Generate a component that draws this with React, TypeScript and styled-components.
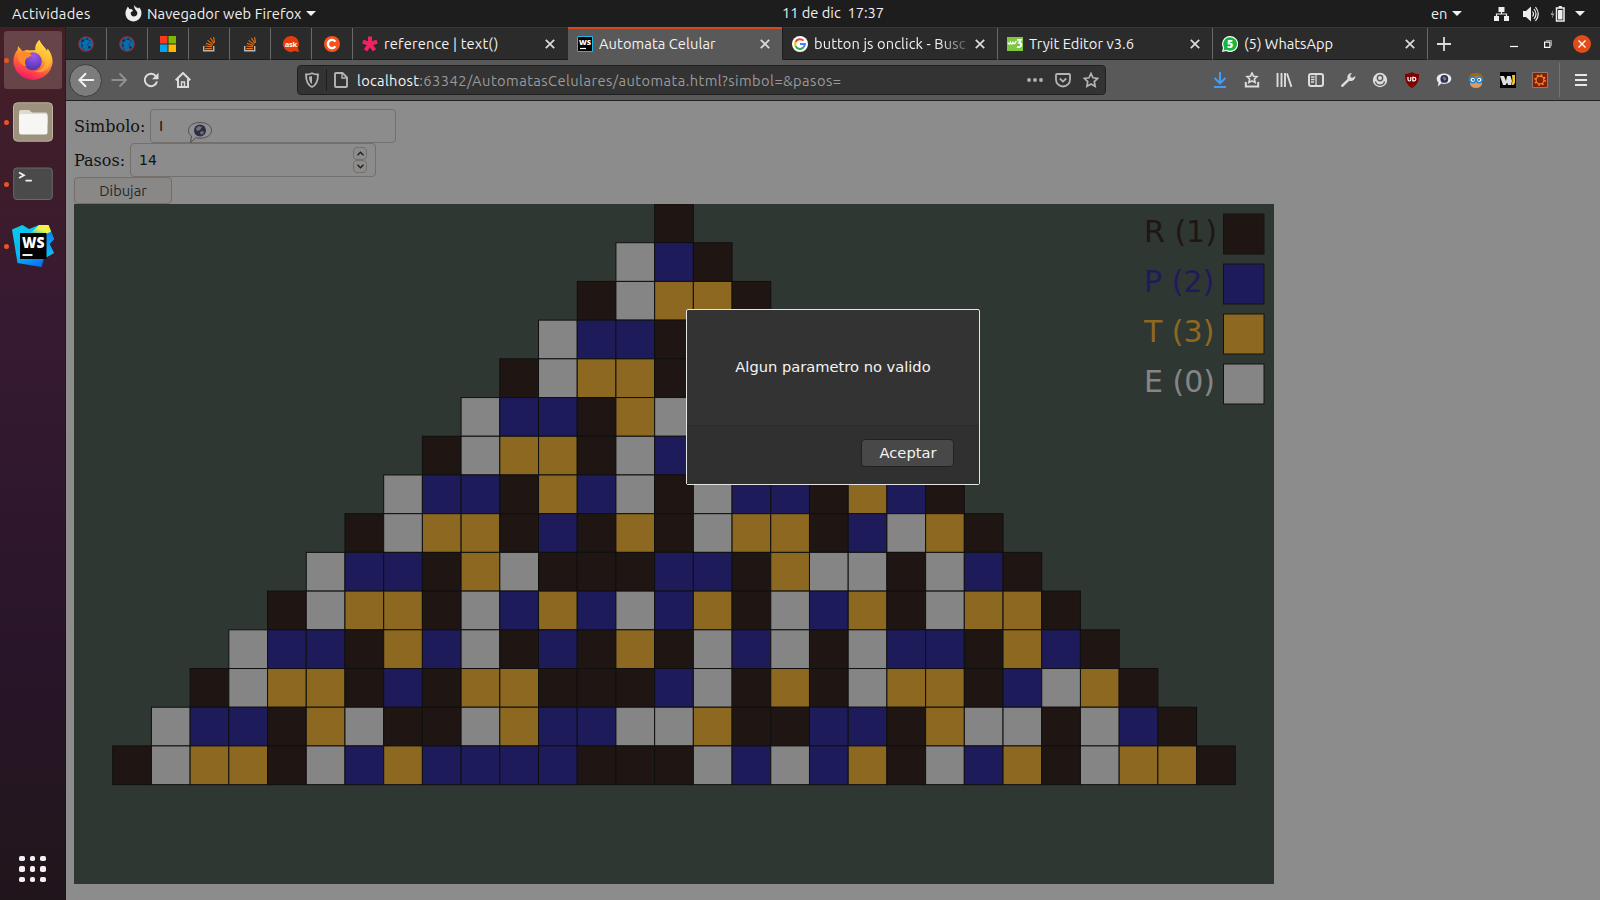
import React from "react";
import styled, { createGlobalStyle, css } from "styled-components";

const ui = `"Ubuntu", "Noto Sans", "Open Sans", sans-serif`;

const Global = createGlobalStyle`
  *, *::before, *::after { box-sizing: border-box; }
  html, body { margin: 0; padding: 0; }
  body { width: 1600px; height: 900px; overflow: hidden; background: #8c8c8c; font-family: ${ui}; }
  svg { display: block; flex: none; }
`;

const Desktop = styled.div`
  display: grid;
  grid-template: 27px 873px / 66px 1534px;
  width: 1600px;
  height: 900px;
  overflow: hidden;
`;

/* ---------- system bar ---------- */
const TopBar = styled.header`
  grid-column: 1 / 3;
  display: grid;
  grid-template-columns: 1fr auto 1fr;
  align-items: center;
  background: #1d1d1d;
  color: #f0f0f0;
  font-size: 14.67px;
  line-height: 26px;
  white-space: pre;
`;
const BarLeft = styled.div`
  display: flex;
  align-items: center;
  padding-left: 12px;
`;
const BarRight = styled.div`
  display: flex;
  align-items: center;
  justify-content: flex-end;
  padding-right: 15px;
`;
const BarText = styled.span<{ $w?: number; $ls?: number }>`
  display: block;
  width: ${(p) => (p.$w ? `${p.$w}px` : "auto")};
  letter-spacing: ${(p) => p.$ls ?? 0}px;
`;
const Clock = styled(BarText)`
  padding: 0 0 2px 66px;
  line-height: 24px;
`;
const Gap = styled.i<{ $w: number }>`
  flex: none;
  width: ${(p) => p.$w}px;
`;
const Caret = styled.i`
  flex: none;
  border: 5px solid transparent;
  border-top: 5px solid #f0f0f0;
  border-bottom: 0;
`;

/* ---------- dock ---------- */
const Dock = styled.nav`
  display: flex;
  flex-direction: column;
  align-items: center;
  gap: 4px;
  padding: 4px 0 0;
  background: linear-gradient(#461f26 0, #3f1d2a 120px, #361a31 300px, #29152a 620px, #23161f 800px, #21151c 100%);
  border-right: 1px solid rgba(20, 10, 16, 0.35);
`;
const DockItem = styled.div<{ $active?: boolean }>`
  position: relative;
  display: flex;
  align-items: center;
  justify-content: center;
  width: 58px;
  height: 58px;
  border-radius: 3px;
  background: ${(p) => (p.$active ? "#664448" : "transparent")};
  &::before {
    content: "";
    position: absolute;
    left: 0;
    top: 26.5px;
    width: 5px;
    height: 5px;
    border-radius: 50%;
    background: #e95420;
  }
`;
const AppsGrid = styled.div`
  display: grid;
  grid-template-columns: repeat(3, 5.4px);
  gap: 5.1px;
  margin: auto 0 18px;
  i { height: 5.4px; border-radius: 1.8px; background: #f2f0f1; }
`;

/* ---------- browser ---------- */
const Browser = styled.main`
  display: grid;
  grid-template-rows: 33px 41px 799px;
`;
const TabStrip = styled.div`
  display: flex;
  background: #2b2b2b;
  border-top: 1px solid #383838;
`;
const tabBase = css`
  display: flex;
  align-items: center;
  height: 32px;
  border-right: 1px solid #6a6a6a;
  border-bottom: 1px solid #1c1c1c;
`;
const PinnedTab = styled.div`
  ${tabBase}
  width: 41px;
  justify-content: center;
`;
const Tab = styled.div<{ $active?: boolean; $plain?: boolean }>`
  ${tabBase}
  width: 215px;
  padding: 0 12px 0 9px;
  ${(p) => p.$plain && "border-right-color: #2b2b2b;"}
  ${(p) =>
    p.$active &&
    css`
      height: 33px;
      margin-top: -1px;
      padding-top: 1px;
      background: #595959;
      border-bottom-color: #595959;
      border-right-color: #1c1c1c;
      box-shadow: inset 0 2px #d9481c;
    `}
`;
const TabTitle = styled.span<{ $ls: number; $fade?: boolean }>`
  flex: 1;
  margin-left: 6px;
  overflow: hidden;
  white-space: nowrap;
  font-size: 14.67px;
  line-height: 20px;
  letter-spacing: ${(p) => p.$ls}px;
  color: #f2f2f2;
  ${(p) => p.$fade && "mask-image: linear-gradient(90deg, #000 125px, transparent 160px);"}
`;
const TabTools = styled.div`
  display: flex;
  align-items: center;
  flex: 1;
  padding: 0 9px 0 9px;
`;

const Toolbar = styled.div`
  display: flex;
  align-items: center;
  background: #595959;
  border-bottom: 1px solid #222;
`;
const BackButton = styled.div`
  display: flex;
  align-items: center;
  justify-content: center;
  width: 33px;
  height: 33px;
  margin-left: 3px;
  border-radius: 50%;
  border: 1px solid #3c3c3c;
  background: #7c7c7c;
`;
const NavIcons = styled.div`
  display: flex;
  gap: 16px;
  width: 195px;
  padding-left: 9px;
`;
const UrlBar = styled.div`
  display: flex;
  align-items: center;
  width: 809px;
  height: 30px;
  padding: 0 6px;
  border: 1px solid #202020;
  border-radius: 4px;
  background: #333;
`;
const UrlDivider = styled.i`
  width: 1px;
  height: 22px;
  margin: 0 6px;
  background: #1f1f1f;
`;
const Url = styled.span`
  flex: 1;
  margin-left: 8px;
  font-size: 14.67px;
  line-height: 20px;
  padding-top: 1px;
  letter-spacing: 0.44px;
  color: #9a9a9a;
  white-space: nowrap;
  b { font-weight: 400; color: #f4f4f4; letter-spacing: 0.3px; }
`;
const UrlTools = styled.div`
  display: flex;
  gap: 12px;
`;
const Extensions = styled.div`
  display: flex;
  align-items: center;
  gap: 16px;
  margin-left: 106px;
`;
const MenuDivider = styled.i`
  width: 1px;
  height: 34px;
  margin: 0 14px 0 11px;
  background: #757575;
`;

/* ---------- page ---------- */
const Page = styled.section`
  position: relative;
  padding: 8px;
  background: #8c8c8c;
  color: #121212;
`;
const Field = styled.div`
  display: flex;
  align-items: center;
  height: 34px;
  font: 16px/32px "DejaVu Serif", serif;
`;
const FieldLabel = styled.label<{ $w: number }>`
  width: ${(p) => p.$w}px;
  padding-top: 2px;
  white-space: nowrap;
`;
const Input = styled.div`
  display: flex;
  align-items: center;
  justify-content: space-between;
  width: 246px;
  height: 34px;
  padding: 1px 8px 0;
  border: 1px solid #746f6b;
  border-radius: 4px;
  font: 14px/21px "DejaVu Sans", sans-serif;
`;
const Spinner = styled.div`
  display: flex;
  flex-direction: column;
  margin-top: -1px;
  span {
    display: flex;
    align-items: center;
    justify-content: center;
    width: 14px;
    height: 13px;
    border: 1px solid #746f6b;
    border-radius: 4px;
  }
`;
const DrawButton = styled.button`
  display: block;
  width: 98px;
  height: 27px;
  padding: 0;
  border: 1px solid #736e6a;
  border-radius: 4px;
  background: #898887;
  color: #24282a;
  font: 14.67px/20px ${ui};
`;
const Bubble = styled.div`
  position: absolute;
  left: 121px;
  top: 20px;
`;
const Board = styled.svg`
  background: #2f3733;
`;
const LegendText = styled.text`
  font: 30px "DejaVu Sans", sans-serif;
`;

const Dialog = styled.div`
  position: absolute;
  left: 620px;
  top: 208px;
  display: grid;
  grid-template-rows: 115px 59px;
  width: 294px;
  height: 176px;
  border: 1px solid #e4e4e4;
  border-radius: 2px;
  background: #333;
  color: #f3f3f3;
  font: 14.67px/20px "DejaVu Sans", sans-serif;
`;
const Message = styled.p`
  margin: 0;
  padding-top: 47px;
  text-align: center;
  white-space: nowrap;
`;
const DialogFooter = styled.div`
  display: flex;
  justify-content: flex-end;
  align-items: flex-start;
  padding: 13px 25px 0 0;
  border-top: 1px solid #2d2d2d;
  background: #303030;
`;
const Accept = styled.button`
  width: 93px;
  height: 28px;
  padding: 0 0 0 1px;
  border: 1px solid #212121;
  border-radius: 4px;
  background: #484848;
  color: inherit;
  font: inherit;
`;

/* ---------- data ---------- */
const COLORS: Record<string, string> = { R: "#1f1613", P: "#1e1b5b", T: "#8c6820", E: "#858585" };
const ROWS = [
  "R",
  "EPR",
  "RETTR",
  "EPPRTPR",
  "RETTRPETR",
  "EPPRTEREPPR",
  "RETTREPTRETTR",
  "EPPRTPEREPPRTPR",
  "RETTRPRTRETTRPETR",
  "EPPRTERRRPPRTEEREPR",
  "RETTREPTPEPTREPTRETTR",
  "EPPRTPERPRTREPEREPPRTPR",
  "RETTRPRTTRRRPERTRETTRPETR",
  "EPPRTERRETPPEETRRPPRTEEREPR",
  "RETTREPTPPPPRRREPEPTREPTRETTR",
];
const CELL = 1200 / 31;
const LEGEND = [
  { k: "R", n: 1 },
  { k: "P", n: 2 },
  { k: "T", n: 3 },
  { k: "E", n: 0 },
];

/* ---------- icons ---------- */
const Icon = ({ children, w = 16, h = w, vb = `0 0 ${w} ${h}` }: { children: React.ReactNode; w?: number; h?: number; vb?: string }) => (
  <svg width={w} height={h} viewBox={vb} fill="none">{children}</svg>
);
const CloseX = () => (
  <Icon w={10}><path d="M.8.8l8.4 8.4M9.2.8L.8 9.2" stroke="#dcdcdc" strokeWidth="1.7" /></Icon>
);
const GlobeRed = () => (
  <Icon>
    <circle cx="8" cy="8" r="7.3" fill="#0b6cab" stroke="#9c2a30" strokeWidth="1.1" />
    <path d="M4.800 2.500C2.500 6 3 10.500 6 14M5 4.500l4-1.700 3.500 2.500M9.500 8.500L12.500 5.500M9.500 8.500l2 3.500" stroke="#163a58" strokeWidth=".8" />
    <circle cx="4.700" cy="4.700" r="1.200" fill="#142c44" /><circle cx="9.300" cy="2.900" r=".9" fill="#142c44" /><circle cx="4" cy="9.500" r="1" fill="#142c44" /><circle cx="11.500" cy="11.500" r="1.200" fill="#142c44" />
  </Icon>
);
const MsLogo = () => (
  <Icon>
    <path fill="#f8391e" d="M0 0h7.5v7.5H0z" /><path fill="#7db900" d="M8.5 0H16v7.5H8.5z" />
    <path fill="#00a4ef" d="M0 8.5h7.5V16H0z" /><path fill="#ffb900" d="M8.5 8.5H16V16H8.5z" />
  </Icon>
);
const StackLogo = () => (
  <Icon>
    <path d="M2.7 10v4.8h10V10" stroke="#b5b8ba" strokeWidth="1.4" />
    <path d="M4.3 12.6h6.6M4.4 10l6.6.8M5 7.2l6.3 2.3M6.6 4.4l5.4 4M9.3 2l3.6 5.3M12.6 1l.9 5.6" stroke="#f0710c" strokeWidth="1.1" />
  </Icon>
);
const AskLogo = () => (
  <Icon>
    <path d="M8 0a8 8 0 1 0 3.6 15.1L16 16l-1-4.200A8 8 0 0 0 8 0z" fill="#e63b0b" />
    <text x="8" y="10.800" fill="#fff" fontFamily="Open Sans" fontWeight="700" fontSize="7.600" textAnchor="middle" textLength="12.500">ask</text>
  </Icon>
);
const CLogo = () => (
  <Icon><circle cx="8" cy="8" r="8" fill="#f8531f" /><path d="M11.300 5.600a4.100 4.100 0 1 0 0 4.800" stroke="#fff" strokeWidth="2.400" /></Icon>
);
const AsteriskLogo = () => (
  <Icon><path d="M8 8V.5M8 8L.800 5.700M8 8l7.200-2.300M8 8l-4.500 6.300M8 8l4.500 6.300" stroke="#f2205f" strokeWidth="4" /></Icon>
);
const WsSmall = () => (
  <Icon>
    <path d="M.5.5h15v15H.5z" fill="#000" stroke="#18b8ea" />
    <text x="2" y="8.600" fill="#fff" fontFamily="Open Sans" fontWeight="800" fontSize="7.500" textLength="12">WS</text>
    <path d="M3 12.500h6" stroke="#fff" strokeWidth="1.200" />
  </Icon>
);
const GoogleLogo = () => (
  <Icon>
    <circle cx="8" cy="8" r="8" fill="#fff" />
    <path d="M11.500 4.600A4.900 4.900 0 0 0 3.600 6" stroke="#ea4335" strokeWidth="2" />
    <path d="M3.600 5.900a4.900 4.900 0 0 0 0 4.300" stroke="#fbbc05" strokeWidth="2" />
    <path d="M3.600 10.100a4.900 4.900 0 0 0 7.700 1.500" stroke="#34a853" strokeWidth="2" />
    <path d="M8 8h4.900a4.900 4.900 0 0 1-1.600 3.600" stroke="#4285f4" strokeWidth="2" />
  </Icon>
);
const W3Logo = () => (
  <Icon>
    <path d="M0 1h16v14H0z" fill="#7fc641" />
    <path d="M1 6.500q1 3 2.500 0 1 3 2.500 0 1.500 3 3.300-1.500" stroke="#fff" strokeWidth="1.500" />
    <path d="M10 3.800h3.800L12 6.700q2.600.4 2.200 2.600Q13.400 12 10 10.800" stroke="#fff" strokeWidth="1.800" />
  </Icon>
);
const WhatsLogo = () => (
  <Icon>
    <path d="M8 0a8 8 0 0 0-7 11.800L0 16l4.200-1A8 8 0 1 0 8 0z" fill="#fff" />
    <path d="M8 1.200a6.800 6.800 0 0 0-5.800 10.300l-.7 3 3-.8A6.800 6.800 0 1 0 8 1.200z" fill="#12b83f" />
    <text x="8" y="11.800" fill="#fff" fontFamily="Open Sans" fontWeight="800" fontSize="10.500" textAnchor="middle">5</text>
  </Icon>
);
const FirefoxMono = () => (
  <Icon w={17}>
    <path d="M9 0c1 2 3 2.500 4.200 3.500l.8-1.200c2 2 2.800 4.500 2.400 7A8 8 0 0 1 .600 10C.2 7 .8 5 2 3.200L2.800 1.500 4.500 4 7 4.200 8 6 5.800 7.300c-.3 2.900 1.200 4.200 3.200 4.200 2.600 0 4-2.200 3-4.700C11 5 9 4 9 0z" fill="#eee" />
  </Icon>
);
const FirefoxBig = () => (
  <svg width="40" height="42" viewBox="0 0 40 42">
    <defs>
      <linearGradient id="fxBody" x1="0.75" y1="0.05" x2="0.35" y2="1">
        <stop offset="0" stopColor="#fff04a" /><stop offset=".35" stopColor="#ffb22e" /><stop offset=".65" stopColor="#ff6038" /><stop offset="1" stopColor="#f5156c" />
      </linearGradient>
      <radialGradient id="fxCore" cx=".55" cy=".2" r=".8"><stop offset="0" stopColor="#a158ef" /><stop offset="1" stopColor="#4d35b0" /></radialGradient>
    </defs>
    <path d="M26.500 1c2 5 5.500 7 7.500 11l.5-2.500C38 13.500 40 19 39.500 24A19.700 19.700 0 0 1 .500 24C.2 18 2 13.500 4.500 11l.5-4 4.500 5.200 4.500-1.500C17 12 20 11 22.500 11 22 7 24 3 26.500 1z" fill="url(#fxBody)" />
    <circle cx="19.800" cy="22.300" r="9" fill="url(#fxCore)" />
    <path d="M5 14c4-2.500 10-1.500 13.500 1.800 0 2.200-4 2-5.500 4.200-1.800 2.500-1 5 .5 7.500C7 26 4 20 5 14z" fill="#ff8a2e" />
    <path d="M22.500 11c5 2 8 6 7.500 11 1.200-1 1.500-2.500 1.500-4 3 6-1.500 14-10 14.500 9 3 16-3 16-11C37.500 13 27 9 26.500 1c-3 2.500-5 6-4 10z" fill="#ffc53a" opacity=".55" />
  </svg>
);
const FilesIcon = () => (
  <svg width="40" height="40" viewBox="0 0 40 40">
    <rect x=".5" y=".8" width="39" height="38.400" rx="4" fill="#9b917c" stroke="#bcb49f" />
    <path d="M6 10q0-2 2-2h8l3 2.500h13.500q2 0 2 2V22H6z" fill="#dedad0" />
    <rect x="6" y="12" width="28.500" height="20.500" rx="2.500" fill="#f8f6f4" />
  </svg>
);
const TerminalIcon = () => (
  <svg width="40" height="34" viewBox="0 0 40 34">
    <rect x=".7" y="1" width="38.600" height="31.500" rx="3" fill="#4a4a4a" stroke="#686868" />
    <path d="M6 5.500l5 2.700L6 11M12.500 13.700h6.300" stroke="#f1f1f1" strokeWidth="1.700" fill="none" />
  </svg>
);
const WebStormIcon = () => (
  <svg width="42" height="42" viewBox="0 0 42 42">
    <defs>
      <linearGradient id="wsA" x1="0" y1="0" x2=".6" y2="1"><stop offset="0" stopColor="#0ccbe8" /><stop offset=".6" stopColor="#09b9f6" /><stop offset="1" stopColor="#0b6ff2" /></linearGradient>
      <linearGradient id="wsB" x1="0" y1="1" x2="1" y2="0"><stop offset="0" stopColor="#0dc0ee" /><stop offset=".5" stopColor="#e8f449" /><stop offset="1" stopColor="#fff14a" /></linearGradient>
      <linearGradient id="wsC" x1="0" y1="0" x2="0" y2="1"><stop offset="0" stopColor="#0b7ff5" /><stop offset="1" stopColor="#0cc4f4" /></linearGradient>
    </defs>
    <path d="M0 4.500L10.500 0l6.500 4L27 0h9.500L42 14l-4.500 5L42 28l-10 5.500-2.500 8.500L5.500 38z" fill="url(#wsA)" />
    <path d="M34 9l5-2 3 7-4.500 5L42 28l-8 4.500z" fill="url(#wsC)" />
    <path d="M18 8.500L27 0h9.500L39 6.500 34 9z" fill="url(#wsB)" />
    <rect x="8" y="8" width="26.500" height="26" fill="#000" />
    <text x="10" y="22.500" fill="#fff" fontFamily="Open Sans" fontWeight="800" fontSize="15.500" textLength="22.500" lengthAdjust="spacingAndGlyphs">WS</text>
    <path d="M10.500 30h10" stroke="#fff" strokeWidth="1.900" />
  </svg>
);
const Lens = () => (
  <svg width="16" height="16" viewBox="0 0 16 16" fill="none">
    <path d="M8 1.500c4.300 0 7.300 2.300 7.300 5.300s-3 5.200-7.300 5.200c-1 0-2-.1-2.800-.4L1.800 14.500l.7-4C1.300 9.500.700 8.400.700 6.800c0-3 3-5.300 7.300-5.300z" fill="#e9e9ee" />
    <circle cx="8.300" cy="6.900" r="3.900" fill="#27305e" /><path d="M6.500 5.500l2-1 2 2.500-2 2z" fill="#8f7a7a" />
  </svg>
);

const G = "#dcdcdc";

export default function App() {
  return (
    <>
      <Global />
      <Desktop>
        <TopBar>
          <BarLeft>
            <BarText $w={113} $ls={0.28}>Actividades</BarText>
            <FirefoxMono />
            <Gap $w={5} />
            <BarText $w={159} $ls={0.08}>Navegador web Firefox</BarText>
            <Caret />
          </BarLeft>
          <Clock>11 de dic  17:37</Clock>
          <BarRight>
            <BarText $w={21}>en</BarText>
            <Caret />
            <Gap $w={32} />
            <Icon w={15} h={14}><path d="M4.500 0h6v5h-6zM0 9h5v5H0zM10 9h5v5h-5z" fill="#eee" /><path d="M7.500 4v3M2.500 9.500V7h10v2.500" stroke="#eee" strokeWidth="1.200" /></Icon>
            <Gap $w={14} />
            <Icon w={16}><path d="M0 5h3l5-4.500v15L3 11H0z" fill="#eee" /><path d="M9.500 5.500q2 2.500 0 5M11 3q4 5 0 10M12.500 1q5.500 7 0 14" stroke="#eee" strokeWidth="1.200" /></Icon>
            <Gap $w={11} />
            <Icon w={15} h={16}><path d="M3.300 3.500L.500 9h2l-.8 4 2.800-5.500h-2z" fill="#999" /><path d="M6.500 2h7.500v13H6.500zM8.700.700h3.200" stroke="#eee" strokeWidth="1.500" /><path d="M8 4h4.500v9.500H8z" fill="#eee" /></Icon>
            <Gap $w={10} />
            <Caret />
          </BarRight>
        </TopBar>

        <Dock>
          <DockItem $active><FirefoxBig /></DockItem>
          <DockItem><FilesIcon /></DockItem>
          <DockItem><TerminalIcon /></DockItem>
          <DockItem><WebStormIcon /></DockItem>
          <AppsGrid>{Array.from({ length: 9 }, (_, i) => <i key={i} />)}</AppsGrid>
        </Dock>

        <Browser>
          <TabStrip>
            <PinnedTab><GlobeRed /></PinnedTab>
            <PinnedTab><GlobeRed /></PinnedTab>
            <PinnedTab><MsLogo /></PinnedTab>
            <PinnedTab><StackLogo /></PinnedTab>
            <PinnedTab><StackLogo /></PinnedTab>
            <PinnedTab><AskLogo /></PinnedTab>
            <PinnedTab><CLogo /></PinnedTab>
            <Tab $plain><AsteriskLogo /><TabTitle $ls={0.16}>reference | text()</TabTitle><CloseX /></Tab>
            <Tab $active><WsSmall /><TabTitle $ls={0.09}>Automata Celular</TabTitle><CloseX /></Tab>
            <Tab><GoogleLogo /><TabTitle $ls={0.1} $fade>button js onclick - Busc</TabTitle><CloseX /></Tab>
            <Tab><W3Logo /><TabTitle $ls={0.06}>Tryit Editor v3.6</TabTitle><CloseX /></Tab>
            <Tab><WhatsLogo /><TabTitle $ls={0}>(5) WhatsApp</TabTitle><CloseX /></Tab>
            <TabTools>
              <Icon w={14}><path d="M7 0v14M0 7h14" stroke={G} strokeWidth="1.800" /></Icon>
              <Gap $w={59} />
              <Icon w={8} h={10}><path d="M0 7.500h8" stroke="#fff" strokeWidth="1.200" /></Icon>
              <Gap $w={26} />
              <Icon w={8}><path d="M.600 2.100h5.300v5.300H.600z" stroke="#fff" strokeWidth="1.200" /><path d="M2 .500h5.500V6" stroke="#999" /></Icon>
              <Gap $w={21} />
              <Icon w={18}><circle cx="9" cy="9" r="9" fill="#e24c1a" /><path d="M5.500 5.500l7 7m0-7l-7 7" stroke="#fff" strokeWidth="1.400" /></Icon>
            </TabTools>
          </TabStrip>

          <Toolbar>
            <BackButton><Icon><path d="M8 1.200L1.400 8 8 14.800M1.500 8H16" stroke="#f0f0f0" strokeWidth="2" /></Icon></BackButton>
            <NavIcons>
              <Icon><path d="M8.500 1.500L15 8l-6.500 6.500M15 8H.500" stroke="#8f8f8f" strokeWidth="2" /></Icon>
              <Icon><path d="M13 4.300A6.200 6.200 0 1 0 14 9.600" stroke={G} strokeWidth="2" /><path d="M15.500.800v6.500H9z" fill={G} /></Icon>
              <Icon><path d="M.700 8.300L8 1l7.300 7.300" stroke={G} strokeWidth="2" /><path d="M3 7v8h10V7" stroke={G} strokeWidth="2" /><path d="M6.500 15v-5h3v5" stroke={G} strokeWidth="1.400" /></Icon>
            </NavIcons>
            <UrlBar>
              <Icon><path d="M8 1.200c2 1 4 1.300 6 1.300C14 9 12.500 13 8 15 3.500 13 2 9 2 2.500c2 0 4-.3 6-1.300z" stroke="#b4b4b4" strokeWidth="1.800" /><path d="M8 4v8C6 11 5 8.500 5 4.800z" fill="#b4b4b4" /></Icon>
              <UrlDivider />
              <Icon><path d="M3 1h6.500L14 5.500V14q0 1-1 1H3q-1 0-1-1V2q0-1 1-1z" stroke="#b4b4b4" strokeWidth="1.900" /><path d="M9 1v5h5" stroke="#b4b4b4" strokeWidth="1.400" /></Icon>
              <Url><b>localhost</b>:63342/AutomatasCelulares/automata.html?simbol=&amp;pasos=</Url>
              <UrlTools>
                <Icon><circle cx="2" cy="8" r="1.900" fill="#b4b4b4" /><circle cx="8" cy="8" r="1.900" fill="#b4b4b4" /><circle cx="14" cy="8" r="1.900" fill="#b4b4b4" /></Icon>
                <Icon><path d="M2 2h12q1 0 1 1v4.500a7 7 0 0 1-14 0V3q0-1 1-1z" stroke="#b4b4b4" strokeWidth="1.800" /><path d="M4.800 6.500L8 9.600l3.200-3.100" stroke="#b4b4b4" strokeWidth="1.800" /></Icon>
                <Icon><path d="M8 1.500l2 4.300 4.700.6-3.400 3.200.8 4.700L8 12l-4.100 2.300.8-4.700L1.300 6.400 6 5.800z" stroke="#b4b4b4" strokeWidth="1.700" /></Icon>
              </UrlTools>
            </UrlBar>
            <Extensions>
              <Icon><path d="M8 0v11M2.500 6L8 11.300 13.500 6M2 15h12" stroke="#419cf5" strokeWidth="2" /></Icon>
              <Icon><path d="M8 1l1.500 3.200 3.500.4-2.600 2.400.7 3.500L8 8.800l-3.100 1.700.7-3.500L3 4.600l3.500-.4z" stroke={G} strokeWidth="1.600" /><path d="M1.800 10v4.600h12.400V10" stroke={G} strokeWidth="2" /></Icon>
              <Icon><path d="M1.500 1v14M5.500 1v14M9 1v14M11 1.500L15.500 15" stroke={G} strokeWidth="1.900" /></Icon>
              <Icon><rect x="1" y="2" width="14" height="12" rx="2" stroke={G} strokeWidth="2" /><path d="M8 2v12M3 5h3.500M3 7.500h3.500M3 10h3" stroke={G} strokeWidth="1.300" /></Icon>
              <Icon><path d="M1 13.300L7.500 7C7 4 8 1.200 12 1L10.300 3.500l.4 2 2 .3L15.300 4c0 4-3 5.500-6 4.800L2.800 15q-2 .2-1.800-1.700z" fill={G} /></Icon>
              <Icon><circle cx="8" cy="8" r="7.200" fill={G} /><circle cx="8" cy="6" r="2.700" fill={G} stroke="#595959" strokeWidth="1.400" /><path d="M3.500 9.500q.5 3.500 4.500 3.500t4.500-3.500" stroke="#595959" strokeWidth="1.500" /></Icon>
              <Icon><path d="M8 0c2 1.500 4.500 2 7 2 0 6-1 10.500-7 14C2 12.500 1 8 1 2c2.500 0 5-.5 7-2z" fill="#800000" /><path d="M4 5v2.500Q4 9 5.400 9t1.400-1.500V5" stroke="#fff" strokeWidth="1.200" /><path d="M8.800 5.300h1.200a1.800 1.800 0 0 1 0 3.600H8.800z" stroke="#fff" strokeWidth="1.200" /></Icon>
              <Lens />
              <Icon><path d="M2 6C2 0 14 0 14 6v6q-1 4-6 4t-6-4z" fill="#e09a62" /><path d="M1 7C1 2 4 1 8 1s7 1 7 6L11 4 6 5z" fill="#a8660c" /><circle cx="4.700" cy="7.800" r="2.900" fill="#fff" stroke="#1387dc" strokeWidth="1.500" /><circle cx="11.300" cy="7.800" r="2.900" fill="#fff" stroke="#1387dc" strokeWidth="1.500" /><circle cx="5" cy="7.800" r=".9" fill="#124" /><circle cx="11" cy="7.800" r=".9" fill="#124" /></Icon>
              <Icon><path d="M0 0h16v16H0z" fill="#000" /><path d="M0 4h4l2 5 1-5h3.500L12 9l-1 4H8.200L7 10.500 5.800 13H3z" fill="#dedede" /><path d="M12 3h3v8l-1.500 2h-2l1-4z" fill="#f4c22b" /></Icon>
              <Icon><path d="M.5.5h15v15H.5z" fill="#8c1a05" stroke="#8e7a70" /><circle cx="8" cy="8" r="5" stroke="#e29a22" strokeWidth="1.600" strokeDasharray="1.700 2.227" /><circle cx="8" cy="8" r="3.900" stroke="#e29a22" strokeWidth="1.100" /></Icon>
            </Extensions>
            <MenuDivider />
            <Icon w={14} h={14}><path d="M1 2h12M1 7h12M1 12h12" stroke="#e8e8e8" strokeWidth="2" /></Icon>
          </Toolbar>

          <Page>
            <Field><FieldLabel $w={76}>Simbolo:</FieldLabel><Input>I</Input></Field>
            <Field>
              <FieldLabel $w={56}>Pasos:</FieldLabel>
              <Input>
                14
                <Spinner>
                  <span><Icon w={7} h={5}><path d="M.500 4.200l3-3 3 3" stroke="#222" strokeWidth="1.500" /></Icon></span>
                  <span><Icon w={7} h={5}><path d="M.500.800l3 3 3-3" stroke="#222" strokeWidth="1.500" /></Icon></span>
                </Spinner>
              </Input>
            </Field>
            <DrawButton>Dibujar</DrawButton>
            <Board width={1200} height={680}>
              {ROWS.map((row, r) =>
                row.split("").map((c, i) => (
                  <rect key={`${r}-${i}`} x={(15 - r + i) * CELL} y={r * CELL} width={CELL} height={CELL} fill={COLORS[c]} stroke="#101010" />
                ))
              )}
              {LEGEND.map(({ k, n }, i) => (
                <g key={k}>
                  <LegendText x={1070} y={38 + i * 50} fill={COLORS[k]}>{`${k} (${n})`}</LegendText>
                  <rect x={1149.5} y={10 + i * 50} width={40.500} height={40} fill={COLORS[k]} stroke="#121412" />
                </g>
              ))}
            </Board>
            <Bubble>
              <svg width="26" height="23" viewBox="0 0 26 23" fill="none">
                <path d="M13 1.500c7 0 11.500 3.300 11.500 8s-5 7.700-11.500 7.700c-1.800 0-3-.2-4-.6L3.500 21.500l1-6.500C2.400 13.600 1.500 11.700 1.500 9.500c0-4.700 4.500-8 11.500-8z" fill="#8f8f8f" stroke="#505050" />
                <circle cx="13" cy="9.500" r="6" fill="#2b2e48" />
                <path d="M9 7l3-2 3 1-2 3-3 1zM13 11l3-1 1 2-3 2z" fill="#77716f" />
              </svg>
            </Bubble>
            <Dialog>
              <Message>Algun parametro no valido</Message>
              <DialogFooter><Accept>Aceptar</Accept></DialogFooter>
            </Dialog>
          </Page>
        </Browser>
      </Desktop>
    </>
  );
}
